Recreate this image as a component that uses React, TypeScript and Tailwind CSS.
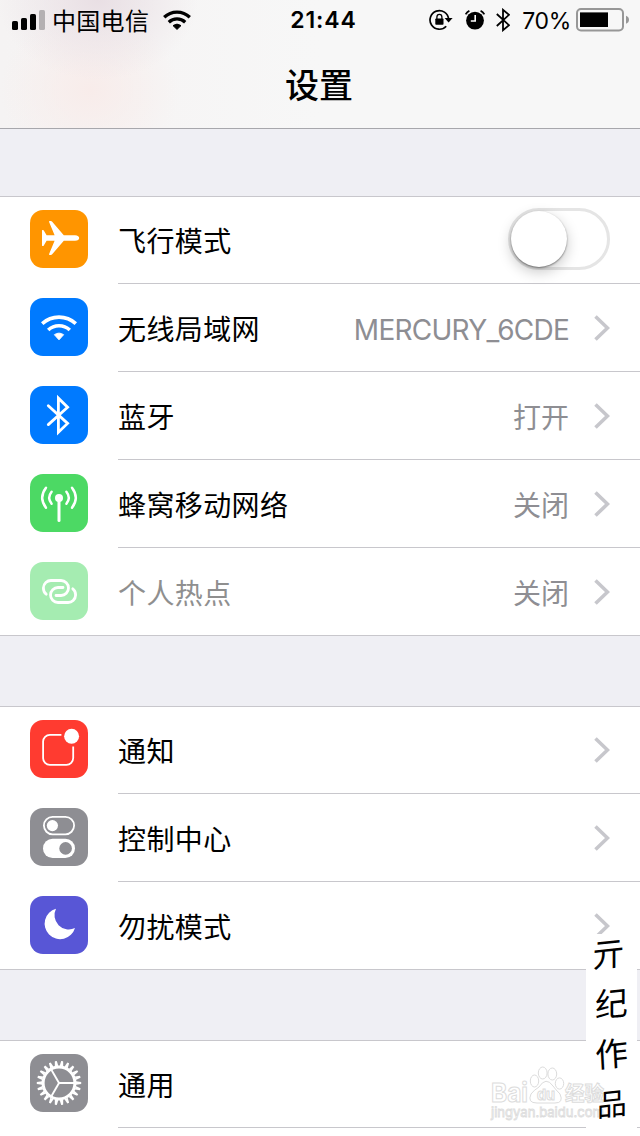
import type { ReactNode } from "react";
import clsx from "clsx";

type Item = {
  label: string;
  value?: string;
  color: string;
  icon: ReactNode;
  toggle?: boolean;
  disabled?: boolean;
};

const GEAR_TEETH = 22;

const PlaneIcon = () => (
  <path
    fill="#fff"
    d="M12 20.4Q12 20 12.4 20H13Q13.5 20 13.8 20.5L16.6 25.2H24.6L19.1 11.9Q18.8 11 19.6 11H20.8Q21.6 11 22.2 11.8L33.8 25.2H45Q49.2 25.6 49.2 28T45 30.8H33.8L22.2 44.2Q21.6 45 20.8 45H19.6Q18.8 45 19.1 44.1L24.6 30.8H16.6L13.8 35.5Q13.5 36 13 36H12.4Q12 36 12 35.6Z"
  />
);

const WifiIcon = () => (
  <g fill="none" stroke="#fff" strokeWidth={3.6}>
    <path d="M12.2 25.6A25 25 0 0 1 45.8 25.6" />
    <path d="M18.2 32A16 16 0 0 1 39.8 32" />
    <path
      d="M24.4 36.7Q29 33.6 33.6 36.7L29 41.8Z"
      fill="#fff"
      strokeWidth={1}
      strokeLinejoin="round"
    />
  </g>
);

const BluetoothIcon = () => (
  <path
    d="M18.3 19.8L37.6 37.4L28.4 46.3V12.2L37.6 21.2L18.3 38.6"
    fill="none"
    stroke="#fff"
    strokeWidth={2.8}
    strokeLinecap="round"
  />
);

const AntennaIcon = () => (
  <g fill="none" stroke="#fff" strokeWidth={2.5} strokeLinecap="round">
    <path d="M29 24V46.4" strokeWidth={3} />
    <circle cx={29} cy={24} r={4} fill="#fff" stroke="none" />
    <path d="M21.6 17.7Q16.8 23.7 21.6 29.7" />
    <path d="M36.4 17.7Q41.2 23.7 36.4 29.7" />
    <path d="M16 13.7Q8.4 23.7 16 33.7" />
    <path d="M42 13.7Q49.6 23.7 42 33.7" />
  </g>
);

const HotspotIcon = () => (
  <g fill="none" stroke="#fff" strokeWidth={2.8} strokeLinecap="round">
    <path d="M16.2 32.2C14 30.6 13.4 28 13.4 26A7.6 7.6 0 0 1 21.5 18.5H31A7.5 7.5 0 0 1 31 33.5H26" />
    <path d="M42.8 26.8C45 28.4 45.6 31 45.6 33A7.6 7.6 0 0 1 37.5 40.5H28A7.5 7.5 0 0 1 28 25.5H33" />
  </g>
);

const NotificationIcon = () => (
  <>
    <path
      d="M31.4 14.8H20A6.8 6.8 0 0 0 13.1 21.7V38A6.8 6.8 0 0 0 20 44.9H36.3A6.8 6.8 0 0 0 43.2 38V26.4"
      fill="none"
      stroke="#fff"
      strokeWidth={1.8}
    />
    <circle cx={41.6} cy={16.3} r={7.5} fill="#fff" />
  </>
);

const ControlIcon = () => (
  <>
    <rect x={13.9} y={8.9} width={30.2} height={17.4} rx={8.7} fill="none" stroke="#fff" strokeWidth={1.8} />
    <circle cx={22.4} cy={17.6} r={5.6} fill="#fff" />
    <rect x={13} y={30.8} width={32} height={19.2} rx={9.6} fill="#fff" />
    <circle cx={35.6} cy={40.4} r={6.3} fill="#8e8e93" />
  </>
);

const MoonIcon = () => (
  <path fill="#fff" d="M26 12.7A15.5 15.5 0 1 0 45 32A14.3 14.3 0 0 1 26 12.7Z" />
);

const GearIcon = () => (
  <g stroke="#fff" fill="none">
    <circle cx={29} cy={29} r={15.9} strokeWidth={3} />
    {Array.from({ length: GEAR_TEETH }, (_, i) => (
      <path
        key={i}
        d="M46 27.2L51.2 28V30L46 30.8Z"
        fill="#fff"
        stroke="none"
        transform={`rotate(${(i * 360) / GEAR_TEETH} 29 29)`}
      />
    ))}
    {[0, 120, 240].map((a) => (
      <path key={a} d="M29 29H44" strokeWidth={1.9} transform={`rotate(${a} 29 29)`} />
    ))}
  </g>
);

const groups: Item[][] = [
  [
    { label: "飞行模式", color: "bg-[#ff9500]", icon: <PlaneIcon />, toggle: true },
    { label: "无线局域网", value: "MERCURY_6CDE", color: "bg-[#007aff]", icon: <WifiIcon /> },
    { label: "蓝牙", value: "打开", color: "bg-[#007aff]", icon: <BluetoothIcon /> },
    { label: "蜂窝移动网络", value: "关闭", color: "bg-[#4cd964]", icon: <AntennaIcon /> },
    { label: "个人热点", value: "关闭", color: "bg-[#a5ecb1]", icon: <HotspotIcon />, disabled: true },
  ],
  [
    { label: "通知", color: "bg-[#ff3b30]", icon: <NotificationIcon /> },
    { label: "控制中心", color: "bg-[#8e8e93]", icon: <ControlIcon /> },
    { label: "勿扰模式", color: "bg-[#5856d6]", icon: <MoonIcon /> },
  ],
];

const general: Item = { label: "通用", color: "bg-[#8e8e93]", icon: <GearIcon /> };

function StatusBar() {
  return (
    <div className="grid h-10 grid-cols-[1fr_auto_1fr] items-center pl-3 pr-[11px]">
      <div className="flex items-center">
        <svg width="33" height="20" viewBox="0 0 33 20">
          <rect x="0" y="11" width="6" height="9" rx="1.6" />
          <rect x="9" y="8" width="6" height="12" rx="1.6" />
          <rect x="18" y="4" width="6" height="16" rx="1.6" />
          <rect x="27" y="0" width="6" height="20" rx="1.6" fill="#b4b0b2" />
        </svg>
        <span className="ml-[7px] pt-[3px] text-[24px] leading-[37px] tracking-[0.3px]">中国电信</span>
        <svg className="ml-3.5" width="28" height="20" viewBox="0 0 28 20" fill="none" stroke="#000" strokeWidth="3.3">
          <path d="M1.2 7.2A18.5 18.5 0 0 1 26.8 7.2" />
          <path d="M5.8 12.2A12 12 0 0 1 22.2 12.2" />
          <path d="M10 15.6Q14 12.6 18 15.6L14 19.4Z" fill="#000" strokeWidth="1" strokeLinejoin="round" />
        </svg>
      </div>
      <div className="pl-1.5 text-[23px] font-semibold leading-10 tracking-[0.9px]">21:44</div>
      <div className="flex items-center justify-end">
        <svg width="24" height="22" viewBox="0 0 24 22">
          <path d="M17.2 17.2A9.3 9.3 0 1 1 19.6 10.2" fill="none" stroke="#000" strokeWidth="1.7" />
          <path d="M15.6 9H23.6L19.6 13.6Z" />
          <rect x="6.3" y="9.4" width="8.2" height="6.4" rx="0.8" />
          <path d="M7.9 10V8A2.5 2.7 0 0 1 12.9 8V10" fill="none" stroke="#000" strokeWidth="1.3" />
        </svg>
        <svg className="ml-3" width="20" height="20" viewBox="0 0 20 20">
          <circle cx="10" cy="10.6" r="8.9" />
          <path d="M0.6 4.4A10 10 0 0 1 4.4 0.8M15.6 0.8A10 10 0 0 1 19.4 4.4" fill="none" stroke="#000" strokeWidth="1.7" />
          <path d="M10.2 5V11H5.8" fill="none" stroke="#fff" strokeWidth="1.6" />
        </svg>
        <svg className="ml-[11px]" width="14" height="24" viewBox="0 0 14 24">
          <path d="M0.8 6L13 17.2L7 22.2V1.8L13 6.8L0.8 18" fill="none" stroke="#000" strokeWidth="1.8" />
        </svg>
        <span className="ml-3 pt-0.5 text-[23px] leading-[38px] tracking-[-0.3px]">70%</span>
        <svg className="ml-[5px]" width="53" height="24" viewBox="0 0 53 24">
          <rect x="1" y="1" width="46" height="21.4" rx="4" fill="none" stroke="#979797" strokeWidth="2" />
          <rect x="4" y="4.4" width="28" height="14.6" />
          <path d="M50 7.8Q53 9 53 11.8T50 15.8Z" fill="#979797" />
        </svg>
      </div>
    </div>
  );
}

function Switch() {
  return (
    <span className="-mt-px flex h-[62px] w-[102px] shrink-0 rounded-full border-[3px] border-[#e5e5e5] bg-white">
      <span className="h-14 w-14 rounded-full bg-white shadow-[0_1px_2px_rgba(0,0,0,0.45),0_5px_14px_rgba(0,0,0,0.22)]" />
    </span>
  );
}

// Rows overlap the section's hairlines by a pixel at both ends
function Row({ item, last }: { item: Item; last?: boolean }) {
  return (
    <div className="flex h-[88px] pl-[30px] first:-mt-px last:-mb-px">
      <svg viewBox="0 0 58 58" className={clsx("mt-3.5 h-[58px] w-[58px] rounded-[13px]", item.color)}>
        {item.icon}
      </svg>
      <div
        className={clsx(
          "ml-[30px] flex flex-1 items-center border-b pr-[30px] text-[28px]",
          last ? "border-transparent" : "border-[#c8c7cc]",
        )}
      >
        <span className={clsx("flex-1 pt-[5px] tracking-[0.4px]", item.disabled && "text-[#8f8f8f]")}>
          {item.label}
        </span>
        {item.value && (
          <span
            className={clsx(
              "pt-[5px] text-[#8e8e93]",
              /^\w+$/.test(item.value) && "tracking-[-0.75px]",
            )}
          >
            {item.value}
          </span>
        )}
        {item.toggle ? (
          <Switch />
        ) : (
          <svg className="ml-[25px]" width="16" height="26" viewBox="0 0 16 26">
            <path d="M1.5 1.5L13.5 13L1.5 24.5" fill="none" stroke="#c7c7cc" strokeWidth="3.6" />
          </svg>
        )}
      </div>
    </div>
  );
}

function Watermark() {
  return (
    <svg
      className="absolute left-[488px] top-[1061px]"
      width="120"
      height="62"
      viewBox="0 0 120 62"
      fill="#fff"
      stroke="#dcdcdc"
      strokeWidth="1"
    >
      <ellipse cx="46.5" cy="20" rx="4.2" ry="6" />
      <ellipse cx="54.7" cy="12" rx="4.4" ry="6" />
      <ellipse cx="64.3" cy="13" rx="4.4" ry="6" />
      <ellipse cx="71.5" cy="22.5" rx="4.2" ry="5.6" />
      <path d="M51 26Q58 15 65 25Q68 29 72 33Q76 42 67 42H49Q39 42 43 33Q46 29 51 26Z" />
      <text x="3" y="41" fontSize="26" fontWeight="700" textLength="37" lengthAdjust="spacingAndGlyphs">
        Bai
      </text>
      <text x="49" y="39" fontSize="15" fontWeight="700" textLength="18" lengthAdjust="spacingAndGlyphs">
        du
      </text>
      <text x="77" y="40" fontSize="20" fontWeight="700" textLength="39" lengthAdjust="spacingAndGlyphs">
        经验
      </text>
      <text x="3" y="56" fontSize="13" textLength="113" strokeWidth="0.8" lengthAdjust="spacingAndGlyphs">
        jingyan.baidu.com
      </text>
    </svg>
  );
}

function Signature() {
  return (
    <div className="absolute left-[586px] top-[929px] flex w-[51px] flex-col items-center text-[33px] leading-[50px]">
      <span className="-translate-x-[3px] -rotate-6 -skew-x-6">亓</span>
      <span className="-rotate-6 -skew-x-6">纪</span>
      <span className="-rotate-6 -skew-x-3">作</span>
      <span className="-rotate-6 -skew-x-6 text-[30px]">品</span>
    </div>
  );
}

export default function App() {
  return (
    <main className="relative h-[1136px] w-[640px] overflow-hidden bg-[#efeff4] font-[Inter,'Noto_Sans_CJK_SC',sans-serif] text-black">
      <header className="h-[129px] border-b border-[#a7a7ac] bg-[#f7f7f7] bg-[radial-gradient(ellipse_100px_80px_at_98px_0px,#e9dfe4,#e9dfe400),radial-gradient(ellipse_90px_80px_at_90px_90px,#f8ecea,#f8ecea00),linear-gradient(to_right,#f5f3f3,#f7f7f7_50%)]">
        <StatusBar />
        <h1 className="pr-0.5 text-center text-[34px] font-medium leading-[92px]">设置</h1>
      </header>

      {groups.map((items, i) => (
        <section
          key={i}
          className={clsx("border-y border-[#c8c7cc] bg-white", i === 0 ? "mt-[67px]" : "mt-[70px]")}
        >
          {items.map((item, j) => (
            <Row key={item.label} item={item} last={j === items.length - 1} />
          ))}
        </section>
      ))}

      <section className="mt-[70px] h-24 border-t border-[#c8c7cc] bg-white">
        <Row item={general} />
      </section>

      <div className="absolute left-[586px] top-[934px] h-[194px] w-[51px] bg-white" />
      <Watermark />
      <Signature />
    </main>
  );
}
